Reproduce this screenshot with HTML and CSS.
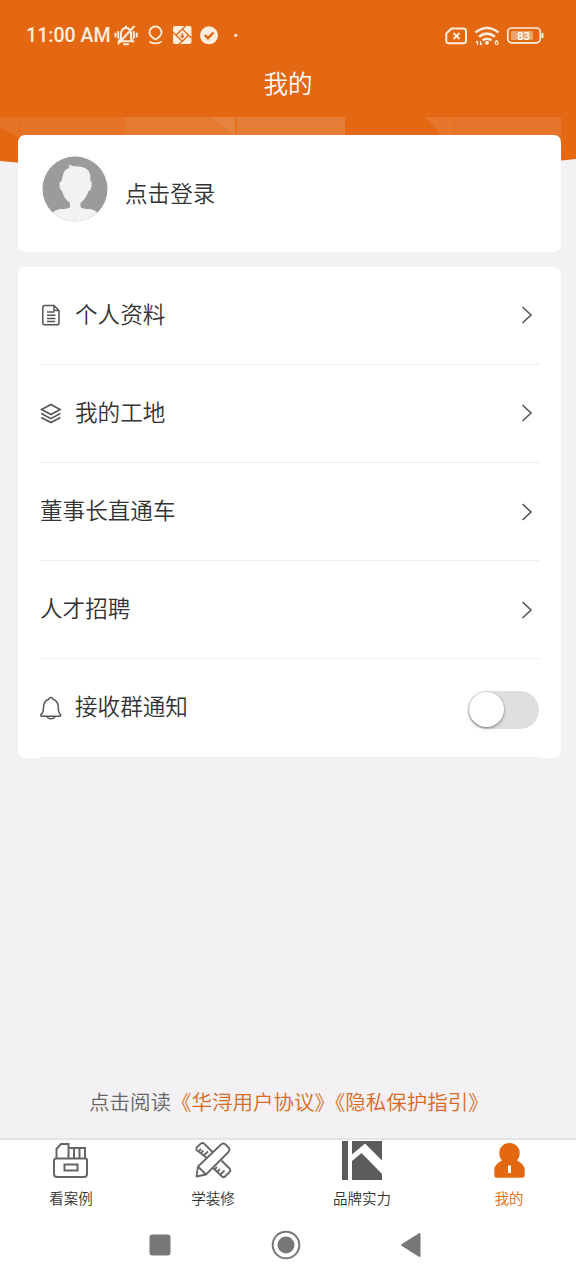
FILE: index.html
```html
<!DOCTYPE html>
<html lang="zh-CN">
<head>
    <meta charset="UTF-8">
    <meta name="viewport" content="width=device-width, initial-scale=1.0">
    <title>我的</title>
    <link rel="stylesheet" href="styles.css">
</head>
<body>

    <!-- Orange banner behind the header and the login card -->
    <svg class="banner" width="576" height="175" viewBox="0 0 576 175">
        <path fill="#e46712" d="M0 0H576V159Q288 190 0 161Z"/>
        <path fill="#e57428" d="M0 117H345V140H22L0 127Z"/>
        <path fill="#e57a31" d="M125 117H345V140H125Z"/>
        <path fill="#e6833f" d="M210 117H345V140H240Z"/>
        <path fill="#e57e37" d="M237 117H345V140H237Z"/>
        <path fill="#e5762c" d="M425 117H561V140H446Z"/>
        <path stroke="#e57022" stroke-width="2" d="M20 117V140M236 117V140M454 117V140"/>
    </svg>

    <header class="header">
        <div class="status-bar">
            <span class="time">11:00 AM</span>
            <svg class="status-left" width="126" height="24" viewBox="114 24 126 24">
                <g fill="none" stroke="#ffeedd" stroke-width="2" stroke-linecap="round">
                    <path d="M119 41.300H133L131 38.500V33Q130 28 126 28T121 33V38.500ZM126 26.500V28M124 44.300H128M118.300 32V38M115.500 33.500V36.500M133.800 32V38M136.800 33.500V36.500"/>
                    <path d="M118.500 43.500L134 26.500"/>
                    <path stroke-width="1.800" d="M155.500 39.500Q149.500 36 149.500 32.500A6 6 0 0 1 161.500 32.500Q161.500 36 155.500 39.500ZM150 42Q155.500 44.800 161 42"/>
                </g>
                <rect x="173" y="26" width="18.500" height="18" rx="2" fill="#ffeedd"/>
                <path fill="none" stroke="#e46712" stroke-width="1.300" d="M182.300 29L188.500 35.200L182.300 41.300L176 35.200ZM176 35.200L173 32.300M182.300 29L185.500 26M188.500 35.200L191.500 38M182.300 41.300L179 44"/>
                <path fill="none" stroke="#e46712" stroke-width="1.200" d="M182.300 33V37M180.500 35.500L182.300 37.500L184.100 35.500"/>
                <circle cx="209" cy="35.300" r="9" fill="#ffeedd"/>
                <path fill="none" stroke="#e46712" stroke-width="2.400" d="M204.800 35L208 38.200L213.500 32.500"/>
                <circle cx="235.700" cy="35.300" r="1.600" fill="#ffeedd"/>
            </svg>
            <svg class="status-right" width="100" height="24" viewBox="445 24 100 24">
                <g fill="none" stroke="#ffeedd" stroke-width="2">
                    <path d="M451.500 28.500H463.500Q466 28.500 466 31V41Q466 43.300 463.500 43.300H448.800Q446.300 43.300 446.300 41V33.500Z"/>
                    <path d="M453.500 33L459.500 39M459.500 33L453.500 39"/>
                    <path stroke-width="2.600" d="M475.500 32.500Q487 23.500 498.500 32.500M479 36.800Q487 30.500 495 36.800M482.500 40.500Q487 37 491.500 40.500"/>
                    <path stroke-width="1.200" d="M477.500 41V45M476 42.500L477.500 41M480.500 41V45M482 43.500L480.500 45"/>
                    <rect x="507.800" y="28" width="32.500" height="14.800" rx="4" stroke-width="1.700"/>
                    <path d="M542.500 33V38"/>
                </g>
                <circle cx="487" cy="42.800" r="2" fill="#ffeedd"/>
                <rect x="511" y="31" width="22" height="9" rx="1" fill="#eda26c"/>
                <text x="494.300" y="45" class="wifi-gen">6</text>
                <text x="523.500" y="39.800" class="battery">83</text>
            </svg>
        </div>
        <h1 class="title">我的</h1>
    </header>

    <main class="content">
        <section class="card login">
            <svg width="66" height="66" viewBox="0 0 66 66">
                <defs><clipPath id="avatar"><circle cx="33" cy="33" r="32.500"/></clipPath></defs>
                <circle cx="33" cy="33" r="32.500" fill="#9b9b9b"/>
                <path clip-path="url(#avatar)" fill="#f2f2f2" d="M21 19Q22 13 28 12L25.500 10.500L28 11L26.500 8.200Q31 11 37 10.500Q46 11 48 18L48.500 25Q50.500 26 49.500 30Q49 35 46.500 35Q44.500 42 38.500 47V51Q40 53 48 53Q54 54 56 58V66H10V58Q12 54 18 53Q27 53 28 51V47Q21.500 42 20 35Q17.500 34 17.500 29Q17 26 19.500 25Z"/>
            </svg>
            <span>点击登录</span>
        </section>

        <section class="card menu">
            <div class="row">
                <svg class="icon" width="22" height="24" viewBox="0 0 22 24">
                    <g fill="none" stroke="#555" stroke-width="1.500">
                        <path d="M4.500 2.500H14L19 7.500V20Q19 21.800 17 21.800H4.500Q2.800 21.800 2.800 20V4.500Q2.800 2.500 4.500 2.500ZM14 2.500V7.500H19"/>
                        <path d="M7 9H14.500M7 12.300H15.500M7 15.500H15.500M7 18.500H15"/>
                    </g>
                </svg>
                <span class="label">个人资料</span>
                <svg class="arrow" width="12" height="18" viewBox="0 0 12 18"><path d="M1.500 1L10 9L1.500 17"/></svg>
            </div>
            <div class="row">
                <svg class="icon" width="22" height="24" viewBox="0 0 22 24">
                    <g fill="none" stroke="#555" stroke-width="1.600">
                        <path d="M1.500 8.500L11 3.500L20 8.500L11 13.500Z"/>
                        <path d="M1.200 12.500L11 17.700L20.300 12.500M1.200 16.500L11 21.500L20.300 16.500"/>
                    </g>
                </svg>
                <span class="label">我的工地</span>
                <svg class="arrow" width="12" height="18" viewBox="0 0 12 18"><path d="M1.500 1L10 9L1.500 17"/></svg>
            </div>
            <div class="row">
                <span class="label">董事长直通车</span>
                <svg class="arrow" width="12" height="18" viewBox="0 0 12 18"><path d="M1.500 1L10 9L1.500 17"/></svg>
            </div>
            <div class="row">
                <span class="label">人才招聘</span>
                <svg class="arrow" width="12" height="18" viewBox="0 0 12 18"><path d="M1.500 1L10 9L1.500 17"/></svg>
            </div>
            <div class="row">
                <svg class="icon" width="22" height="24" viewBox="0 0 22 24">
                    <path fill="none" stroke="#555" stroke-width="1.500" stroke-linejoin="round" d="M8.800 3.300Q9.300 1.500 11 1.500T13 3.300Q18.300 5 18.300 11.500Q18.300 17 20.500 18.500Q21 20.300 19.500 20.300H2Q.5 20.300 1 18.500Q3.500 17 3.500 11.500Q3.500 5 8.800 3.300ZM7 20.500Q8 22.800 11 22.800T15 20.500"/>
                </svg>
                <span class="label">接收群通知</span>
                <span class="switch"></span>
            </div>
        </section>
    </main>

    <p class="agreement">点击阅读<a>《华浔用户协议》《隐私保护指引》</a></p>

    <nav class="tabs">
        <div class="tab">
            <svg width="40" height="40" viewBox="0 0 40 40" fill="none" stroke="#666" stroke-width="2">
                <path d="M5.500 18.500V9L10 4H17.500V18M17.500 8H34V18M23 8V18M28.500 8V18"/>
                <path d="M5 18.500H34.500Q36 18.500 36 20V34Q36 37 33 37H6Q3 37 3 34V21Q3 18.500 5 18.500Z"/>
                <path d="M13.500 24.500H26.500V30.500H13.500Z"/>
            </svg>
            <span>看案例</span>
        </div>
        <div class="tab">
            <svg width="40" height="40" viewBox="0 0 40 40" fill="none" stroke="#666" stroke-width="1.800" stroke-linejoin="round">
                <path d="M14.500 18.500L3.500 10Q2.500 8.500 4 7L8 3.500Q9.500 2.500 11 3.500L20 12.500M28.500 20.500L37 29Q38 30.500 36.500 32L32 36.500Q30.500 38 29 36.500L19.500 27.500"/>
                <path d="M3.500 36.500L5 26.500L28 4.500Q30.500 2.500 32.500 4.500L35.500 7.500Q37.500 9.500 35.500 12L13 34.500ZM5 26.500L13 34.500"/>
                <path d="M8 13L10.500 10.500M10.500 15.500L15 11.500M6 11L8 9M24 32L27 29M27 35L31.500 30.500M21.500 29.500L24 27"/>
            </svg>
            <span>学装修</span>
        </div>
        <div class="tab">
            <svg width="40" height="40" viewBox="0 0 40 40">
                <path fill="#5c5c5c" d="M0 1H6V40H0ZM10 1H40V20.500L23 3.500L10 14.500ZM10 21L19.500 13L40 34V40H10Z"/>
            </svg>
            <span>品牌实力</span>
        </div>
        <div class="tab active">
            <svg width="40" height="40" viewBox="0 0 40 40">
                <path fill="#e46712" d="M20.500 3C26.500 3 30.700 7.500 30.700 13C30.700 16.500 29.300 19 28 20.500C31.500 22 35.700 25.500 35.700 30V35Q35.700 37.700 33 37.700H8Q5.300 37.700 5.300 35V30C5.300 25.500 9.500 22 13 20.500C11.700 19 10.300 16.500 10.300 13C10.300 7.500 14.500 3 20.500 3Z"/>
                <path fill="#fff" d="M19 25.500H22V33H19Z"/>
            </svg>
            <span>我的</span>
        </div>
    </nav>

    <!-- System navigation -->
    <div class="system-nav">
        <svg width="22" height="22" viewBox="0 0 22 22"><rect x=".5" y=".5" width="21" height="21" rx="3" fill="#777"/></svg>
        <svg width="30" height="30" viewBox="0 0 30 30">
            <circle cx="15" cy="15" r="13.300" fill="none" stroke="#777" stroke-width="2"/>
            <circle cx="15" cy="15" r="8.500" fill="#777"/>
        </svg>
        <svg width="22" height="26" viewBox="0 0 22 26"><path fill="#777" stroke="#777" stroke-width="2" stroke-linejoin="round" d="M2 13L19.500 2V24Z"/></svg>
    </div>

</body>
</html>
```

FILE: styles.css
```css
* {
    box-sizing: border-box;
}

body {
    margin: 0;
    height: 1280px;
    display: flex;
    flex-direction: column;
    position: relative;
    overflow: hidden;
    background: #f3f1f3;
    color: #333;
    font-family: "Noto Sans CJK SC", sans-serif;
    font-weight: 350;
}

svg {
    display: block;
    flex: none;
}

.banner {
    position: absolute;
    top: 0;
    left: 0;
    z-index: -1;
}

.header {
    height: 135px;
    color: #fff;
}

.status-bar {
    display: flex;
    align-items: center;
    height: 48px;
    padding: 24px 31px 0 26px;
    color: #ffeedd;
}

.time {
    width: 88px;
    white-space: nowrap;
    font: 500 19.6px/24px Roboto, sans-serif;
}

.status-right {
    margin-left: auto;
}

.wifi-gen {
    fill: #ffeedd;
    font: 700 8px Roboto, sans-serif;
}

.battery {
    fill: #fff;
    font: 500 11.5px Roboto, sans-serif;
    text-anchor: middle;
}

.title {
    margin: 17px 0 0;
    font-size: 24.5px;
    line-height: 36px;
    font-weight: 350;
    text-align: center;
}

.content {
    display: flex;
    flex-direction: column;
    gap: 15px;
    padding: 0 15.5px 0 18px;
}

.card {
    background: #fff;
    border-radius: 7px;
    font-size: 22.6px;
    line-height: 32px;
}

.login {
    display: flex;
    align-items: flex-start;
    gap: 17px;
    height: 116.6px;
    padding: 21px 24px;
}

.login span {
    padding-top: 21px;
}

.menu {
    height: 491px;
    padding: 0 22px;
}

.row {
    display: flex;
    align-items: center;
    height: 98.2px;
    border-bottom: 1px solid #eee;
}

.icon {
    margin-right: 13px;
}

.label {
    flex: 1;
    padding-bottom: 3px;
}

.arrow {
    margin-right: 6px;
    fill: none;
    stroke: #555;
    stroke-width: 1.6;
}

.switch {
    width: 71px;
    height: 38px;
    margin-top: 4px;
    padding: 1.5px;
    border-radius: 19px;
    background: #dfdfdf;
}

.switch::before {
    content: "";
    display: block;
    width: 35px;
    height: 35px;
    border-radius: 50%;
    background: #fff;
    box-shadow: 0 1px 3px rgba(0, 0, 0, 0.5);
}

.agreement {
    margin: auto 0 22px 89px;
    font-size: 20.5px;
    line-height: 30px;
    color: #666;
}

.agreement a {
    color: #d96a1d;
}

.tabs {
    display: grid;
    grid-template-columns: 142px 142px 156px 138px;
    height: 81px;
    border-top: 2px solid #e4e4e4;
    background: #fff;
}

.tab {
    display: flex;
    flex-direction: column;
    align-items: center;
    gap: 7px;
    font-size: 14.5px;
    line-height: 22px;
}

.active {
    color: #e46712;
}

.system-nav {
    display: flex;
    align-items: center;
    height: 61px;
    padding: 0 154px 9px 149px;
    justify-content: space-between;
    background: #fff;
}
```
